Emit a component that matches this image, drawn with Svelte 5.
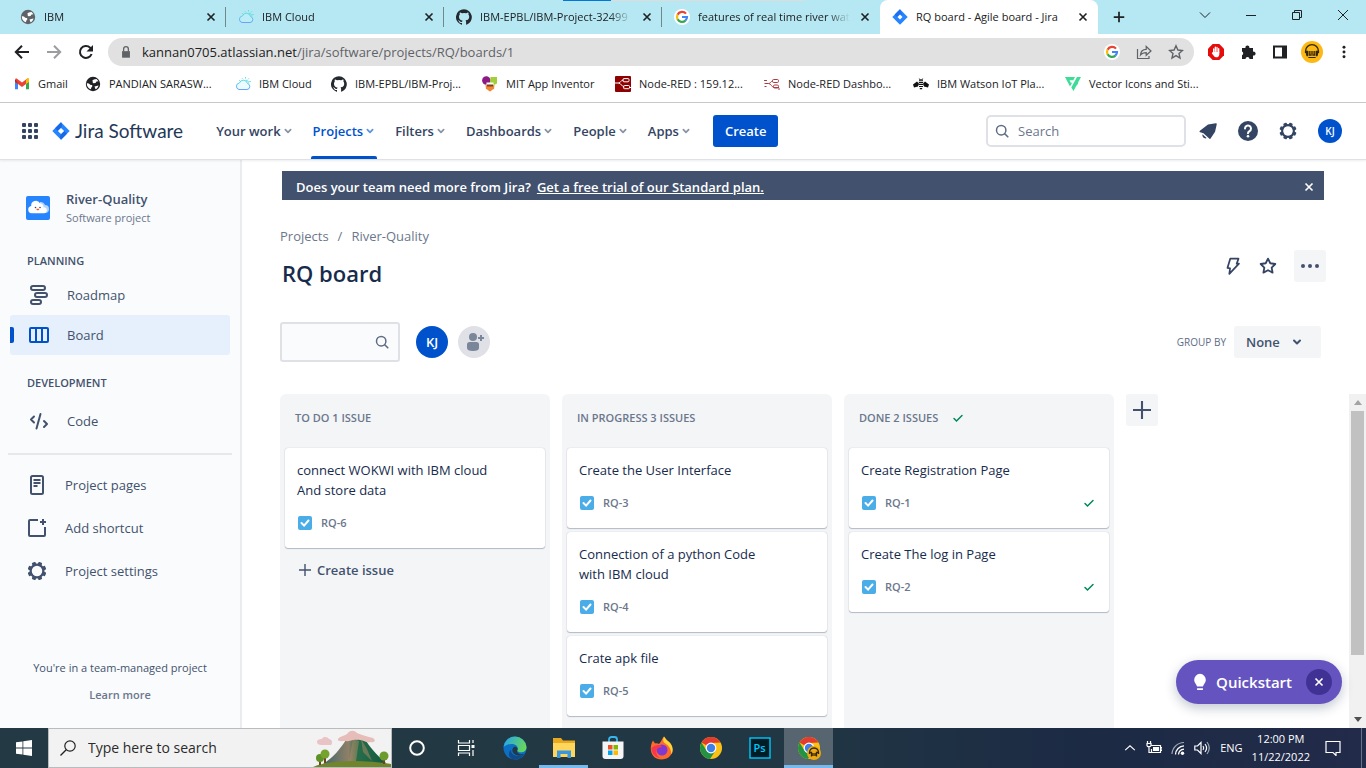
<script>
  const tabs = [
    { icon: 'globe', title: 'IBM' },
    { icon: 'cloud', title: 'IBM Cloud' },
    { icon: 'github', title: 'IBM-EPBL/IBM-Project-32499' },
    { icon: 'google', title: 'features of real time river wat' },
    { icon: 'jira', title: 'RQ board - Agile board - Jira', active: true }
  ];
  const bookmarks = [
    ['gmail', 'Gmail'],
    ['globeDark', 'PANDIAN SARASW...'],
    ['cloud', 'IBM Cloud'],
    ['github', 'IBM-EPBL/IBM-Proj...'],
    ['mit', 'MIT App Inventor'],
    ['nodered', 'Node-RED : 159.12...'],
    ['noderedDash', 'Node-RED Dashbo...'],
    ['bee', 'IBM Watson IoT Pla...'],
    ['vector', 'Vector Icons and Sti...']
  ];
  const nav = ['Your work', 'Projects', 'Filters', 'Dashboards', 'People', 'Apps'];
  const columns = [
    {
      title: 'TO DO 1 ISSUE',
      create: true,
      cards: [{ text: 'connect WOKWI with IBM cloud And store data', id: 'RQ-6' }]
    },
    {
      title: 'IN PROGRESS 3 ISSUES',
      cards: [
        { text: 'Create the User Interface', id: 'RQ-3' },
        { text: 'Connection of a python Code with IBM cloud', id: 'RQ-4' },
        { text: 'Crate apk file', id: 'RQ-5' }
      ]
    },
    {
      title: 'DONE 2 ISSUES',
      done: true,
      cards: [
        { text: 'Create Registration Page', id: 'RQ-1' },
        { text: 'Create The log in Page', id: 'RQ-2' }
      ]
    }
  ];
  const apps = [
    ['cortana', 'Cortana'],
    ['taskview', 'Task view'],
    ['edge', 'Edge'],
    ['folder', 'File Explorer'],
    ['store', 'Store'],
    ['firefox', 'Firefox'],
    ['chrome', 'Chrome'],
    ['ps', 'Photoshop'],
    ['chromeUser', 'Chrome profile']
  ];
</script>

{#snippet chromeArt()}
  <circle cx="12" cy="12" r="11" fill="#fbc116" />
  <path d="M12 12 2.500 6.500A11 11 0 0 1 21.500 6.500L12 7Z" fill="#e33b2e" />
  <path d="M2.500 6.500A11 11 0 0 0 11 23L16.500 14.500 12 17 7.500 14.500Z" fill="#229342" />
  <circle cx="12" cy="12" r="5.400" fill="#fff" />
  <circle cx="12" cy="12" r="4.200" fill="#3f7fe8" />
{/snippet}

{#snippet icon(name, size = 16)}
  <svg width={size} height={size} viewBox={['edge', 'folder', 'store', 'firefox', 'chrome', 'ps', 'chromeUser', 'cortana', 'taskview', 'gear', 'help', 'notify', 'roadmap', 'board', 'code', 'pages', 'shortcut', 'bolt', 'starBig', 'more', 'addPerson', 'bulb', 'cloudFace', 'grid', 'jiraBig', 'profile', 'abp'].includes(name) ? '0 0 24 24' : '0 0 16 16'} fill="none" aria-hidden="true">
    {#if name === 'globe' || name === 'globeDark'}
      <circle cx="8" cy="8" r="7.200" fill={name === 'globe' ? '#5f6368' : '#202124'} />
      <path d="M1.800 7.200c2 0 2.900.5 3.200 1.500l1.800.4c.9.600.7 1.500 0 2-.7.500-.7 1.200-.8 2.200C3.300 12.600 1.600 10 1.800 7.200ZM8.700 3.400l2.800-.4 2 2.300-2 .3-1 1.500-2 .2c-.9-.3-1-.9-.5-1.500l-.7-.6c-.100-.9.700-1 1.400-1.800ZM9.500 10.500l4-1.100c-.4 1.900-1.400 3-3 3.800Z" fill="#fff" />
    {:else if name === 'cloud'}
      <path d="M4 13.500h8a3 3 0 0 0 .6-5.900A4.300 4.300 0 0 0 4.400 7 3.300 3.300 0 0 0 4 13.500Z" stroke="url(#ibm)" stroke-width="1" fill="#c9f3ff" fill-opacity=".35" />
      <path d="M10.500 4.300a3 3 0 0 1 3.300 3.300M10.500 1v1.500M14 2.300l-1 1.100M15.800 5.500h-1.500M7 2.300l.9 1M4.200 4.300l1 .6" stroke="#61dfe0" stroke-width="1" />
      <defs><linearGradient id="ibm" x1="0" y1="4" x2="0" y2="14" gradientUnits="userSpaceOnUse"><stop stop-color="#5fe0dc" /><stop offset="1" stop-color="#67a0ff" /></linearGradient></defs>
    {:else if name === 'github'}
      <path d="M8 .2a8 8 0 0 0-2.500 15.600c.4.100.5-.2.500-.4v-1.500c-2.200.5-2.700-1-2.700-1-.4-.9-.9-1.200-.9-1.200-.7-.5.100-.5.100-.5.800.100 1.200.8 1.200.8.700 1.300 1.900.9 2.400.7.100-.5.300-.9.500-1.100-1.800-.2-3.600-.9-3.600-4 0-.9.300-1.600.8-2.100-.100-.2-.4-1 .100-2.100 0 0 .7-.2 2.200.8a7.500 7.500 0 0 1 4 0c1.500-1 2.200-.8 2.200-.8.4 1.100.2 1.900.100 2.100.5.600.8 1.300.8 2.100 0 3.100-1.900 3.700-3.700 3.900.3.300.6.800.6 1.500v2.300c0 .2.100.5.500.4A8 8 0 0 0 8 .2Z" fill="#24292f" />
    {:else if name === 'google'}
      <circle cx="8" cy="8" r="8" fill="#fff" />
      <path d="M12 4.600A5 5 0 0 0 3.600 5.700" stroke="#ea4335" stroke-width="2.200" />
      <path d="M3.600 5.600a5 5 0 0 0 0 4.800" stroke="#fbbc05" stroke-width="2.200" />
      <path d="M3.600 10.300a5 5 0 0 0 7.800 1.300" stroke="#34a853" stroke-width="2.200" />
      <path d="M11.300 11.700A5 5 0 0 0 13 8H8" stroke="#4285f4" stroke-width="2.200" />
    {:else if name === 'jira'}
      <path d="M8 .3 15.700 8 8 15.700.3 8Z" fill="#2684ff" />
      <path d="M8 .3 10.300 5.800 8 5.500 5 8 2.700 5.600Z" fill="#1d6ff2" />
      <path d="M8 5.500 10.500 8 8 10.500 5.500 8Z" fill="#fff" />
    {:else if name === 'jiraBig'}
      <path d="M12 2.500 21.500 12 12 21.500 2.500 12Z" fill="#2684ff" />
      <path d="M12 2.500c1.600 2 1.400 4.200 0 6L8.600 12 5.500 9ZM12 21.500c-1.600-2-1.400-4.200 0-6L15.400 12l3.100 3Z" fill="#1868e5" />
      <path d="M12 8.600 15.400 12 12 15.400 8.600 12Z" fill="#fff" />
    {:else if name === 'gmail'}
      <path d="M1 3.500v9.700h3V7Z" fill="#4285f4" />
      <path d="M15 3.500v9.700h-3V7Z" fill="#34a853" />
      <path d="M1 3.200 4 4.200V8L1 5.800Z" fill="#c5221f" />
      <path d="m12 4.200 3-1v2.600L12 8Z" fill="#fbbc04" />
      <path d="m1.300 2.600 1.400-.2L8 6.500l5.300-4.100 1.400.2L12 8 8 11 4 8Z" fill="#ea4335" />
      <path d="M12 4v4l3-2.200V3.300c0-.9-1-1.400-1.800-.9Z" fill="#fbbc04" />
    {:else if name === 'mit'}
      <circle cx="4.300" cy="4.500" r="4.200" fill="#8b1a85" />
      <path d="M8.500 1h6.500v6.500l-4 2-3-3Z" fill="#a2cf39" />
      <path d="M3.500 9.300c3-1.800 6-1.800 9 0L12 13c-2 .6-2.500 2-4 2.500C6.500 15 6 13.500 4 13Z" fill="#ef8535" />
      <path d="M4.500 6.500h7v2.700h-7Z" fill="#fff" /><path d="M5 8.500h6v2H5Z" fill="#7d431c" />
    {:else if name === 'nodered'}
      <rect width="16" height="16" rx="1" fill="#8f0000" />
      <path d="M0 7h3.500C6 7 5.500 4 8.500 4M3.500 7C6 7 7 11 9.500 11M14 11.500h2" stroke="#fff" stroke-width="1" />
      <rect x="8" y="2.600" width="6" height="3.200" rx="1" stroke="#fff" /><rect x="8.500" y="9.500" width="6" height="3.200" rx="1" stroke="#fff" />
    {:else if name === 'noderedDash'}
      <path d="M.5 7.500h4C7 7.500 6.500 5 9 5M0 4.500h3M.5 10.500h2M4.500 7.500C7 7.500 8 11.500 10 11.500h5M15 12v2" stroke="#aa3f42" />
      <rect x="8.500" y="3.500" width="6" height="3" rx="1.200" stroke="#aa3f42" /><rect x="9.500" y="9" width="5" height="3" rx="1.200" stroke="#aa3f42" />
    {:else if name === 'bee'}
      <path d="M0 8.500 4 5.500l2 2.200-1 2.800-4 1ZM16 8.500 12 5.500l-2 2.200 1 2.800 4 1Z" fill="#111" />
      <path d="M6 4.200h4M5.800 6.300h4.400M5.800 8.400h4.400M6 10.500h4M6.800 12.600h2.400" stroke="#111" stroke-width="1.200" />
      <path d="m6.300 2.500 1 1.300M9.700 2.500l-1 1.300" stroke="#111" stroke-width=".8" />
    {:else if name === 'vector'}
      <path d="M0 1h10L8.300 4.200H4.500l1.300 2.500h1.300L5 10.500ZM12 1h4L8.500 15 6.300 11.500Z" fill="#3ddc97" />
      <path d="m9.600 7 3.800-.2-1.400 2.500H8.500Z" fill="#3ddc97" />
    {:else if name === 'x'}
      <path d="m4 4 8 8M12 4l-8 8" stroke="currentColor" stroke-width="1.900" />
    {:else if name === 'plusTab'}
      <path d="M8 2v12M2 8h12" stroke="currentColor" stroke-width="2" />
    {:else if name === 'plus'}
      <path d="M8 2v12M2 8h12" stroke="currentColor" stroke-width="1.400" />
    {:else if name === 'winDown'}
      <path d="m3 5.500 5 5 5-5" stroke="currentColor" />
    {:else if name === 'winMin'}
      <path d="M3 8.500h10" stroke="currentColor" />
    {:else if name === 'winRestore'}
      <path d="M3.500 5.500h7v7h-7ZM5.500 5.500v-2h7v7h-2" stroke="currentColor" />
    {:else if name === 'winClose'}
      <path d="m3 3 10 10M13 3 3 13" stroke="currentColor" />
    {:else if name === 'back'}
      <path d="M15 8H2M8 1.800 1.800 8 8 14.200" stroke="currentColor" stroke-width="2" />
    {:else if name === 'forward'}
      <path d="M1 8h13M8 1.800 14.200 8 8 14.200" stroke="currentColor" stroke-width="2" />
    {:else if name === 'reload'}
      <path d="M13.600 10A6 6 0 1 1 12.200 3.700L14 5.500" stroke="currentColor" stroke-width="2" /><path d="M15 1v6.500H8.500Z" fill="currentColor" />
    {:else if name === 'lock'}
      <path d="M3.500 7h9v7.500h-9Z" fill="#5f6368" /><path d="M5.300 7V4.500a2.700 2.700 0 0 1 5.400 0V7" stroke="#5f6368" stroke-width="1.500" />
    {:else if name === 'share'}
      <path d="M1.500 5v9.500h11.500V12M4.500 11c.3-4 2.500-5.700 5.700-5.700V2.500L15 7l-4.800 4.300V8.600C7.500 8.600 5.800 9.200 4.500 11Z" stroke="#5f6368" stroke-width="1.200" />
    {:else if name === 'star'}
      <path d="m8 1.800 1.900 4.200 4.500.5-3.400 3 1 4.500-4-2.400L4 14l1-4.500-3.400-3L6.100 6Z" stroke="#5f6368" stroke-width="1.400" />
    {:else if name === 'abp'}
      <path d="M7 0h10l7 7v10l-7 7H7l-7-7V7Z" fill="#e60c0c" />
      <path d="M8.500 13V7.500M11 11V4.800M13.500 11V5.200M16 12.500V7" stroke="#fff" stroke-width="2" stroke-linecap="round" /><path d="M8 11.500h9V15c0 3.500-2 5-4.500 5S9 18.500 5.500 13.500Z" fill="#fff" />
    {:else if name === 'puzzle'}
      <path d="M2 4h3.500a2 2 0 1 1 3.800 0H13v3.700a2 2 0 1 1 0 3.800V15H9.500a2 2 0 0 0-4 0H2v-3.800a2 2 0 0 0 0-3.700Z" fill="#202124" />
    {:else if name === 'panel'}
      <path d="M2 2.500h12v11H2Z" stroke="#202124" stroke-width="2" /><path d="M10 2h4v12h-4Z" fill="#202124" />
    {:else if name === 'profile'}
      <circle cx="12" cy="12" r="12" fill="#fdb913" />
      <path d="M5 13V11a7 7 0 0 1 14 0v2" stroke="#332508" stroke-width="1.500" /><path d="M4.500 10.500h3.300v6H6ZM19.500 10.500h-3.300v6H18Z" fill="#332508" />
      <path d="M9 11v4.500h2V11M13 11v4.500h2V11M8 18h8" stroke="#332508" stroke-width="1.300" />
    {:else if name === 'dots'}
      <circle cx="8" cy="2.500" r="1.700" fill="#202124" /><circle cx="8" cy="8" r="1.700" fill="#202124" /><circle cx="8" cy="13.500" r="1.700" fill="#202124" />
    {:else if name === 'grid'}
      {#each [4, 10, 16] as x}{#each [4, 10, 16] as y}<rect {x} {y} width="4" height="4" rx="1" fill="#344563" />{/each}{/each}
    {:else if name === 'chev'}
      <path d="m5 6.500 3 3 3-3" stroke="currentColor" stroke-width="2" stroke-linecap="round" stroke-linejoin="round" />
    {:else if name === 'search'}
      <circle cx="7.200" cy="7.200" r="4.700" stroke="#5e6c84" stroke-width="1.500" /><path d="m10.700 10.700 3.100 3.100" stroke="#5e6c84" stroke-width="1.600" stroke-linecap="round" />
    {:else if name === 'notify'}
      <path d="M20.500 3.500 12 5 3.500 11.500c-1 .9-1 1.500 0 1.800l3.500 1.200 6 5.500c1 .9 1.500.9 2.200-.3l4.500-7L21.500 5c.100-1-.2-1.600-1-1.500Z" fill="#344563" />
      <path d="m6 15.500 4.500 4.200c-2 1.300-5.300-1.200-4.500-4.200Z" fill="#344563" />
    {:else if name === 'help'}
      <circle cx="12" cy="12" r="10" fill="#344563" />
      <path d="M9 9.500a3 3 0 1 1 4.500 2.600c-1 .6-1.500 1-1.500 2.200" stroke="#fff" stroke-width="2" stroke-linecap="round" /><circle cx="12" cy="17.300" r="1.300" fill="#fff" />
    {:else if name === 'gear'}
      <circle cx="12" cy="12" r="6.400" stroke="currentColor" stroke-width="2.300" />
      {#each [22.5, 67.5, 112.5, 157.5, 202.5, 247.5, 292.5, 337.5] as a}<rect x="10" y="2.700" width="4" height="3.800" rx="1" fill="currentColor" transform="rotate({a} 12 12)" />{/each}
    {:else if name === 'cloudFace'}
      <rect width="24" height="24" rx="2" fill="#2684ff" />
      <path d="M14 6a5 5 0 0 1 5 3 4 4 0 0 1 0 8h-5Z" fill="#b3d4ff" />
      <path d="M5.500 17.300a3.700 3.700 0 0 1-.3-7.300A4.700 4.700 0 0 1 14 7.200a4 4 0 0 1 3.500 4 3 3 0 0 1 .5 6.100Z" fill="#fff" />
      <circle cx="9.500" cy="11.500" r=".8" fill="#344563" /><circle cx="14" cy="11.500" r=".8" fill="#344563" /><path d="M10.400 12.700h2.800c0 2-2.800 2-2.800 0Z" fill="#ff5630" />
    {:else if name === 'roadmap'}
      <g stroke="currentColor" stroke-width="2"><rect x="4" y="3" width="14" height="4" rx="2" /><rect x="8" y="10" width="12" height="4" rx="2" /><rect x="4" y="17" width="10" height="4" rx="2" /></g>
    {:else if name === 'board'}
      <path d="M4 5h16a1 1 0 0 1 1 1v12a1 1 0 0 1-1 1H4a1 1 0 0 1-1-1V6a1 1 0 0 1 1-1ZM9 5v14M15 5v14" stroke="currentColor" stroke-width="2" />
    {:else if name === 'code'}
      <path d="m7 7.500-3 3 3 3M17 12l3 3-3 3M13.500 5l-4 14.500" stroke="currentColor" stroke-width="2" stroke-linecap="round" stroke-linejoin="round" />
    {:else if name === 'pages'}
      <rect x="6" y="3" width="12" height="18" rx="1.500" stroke="currentColor" stroke-width="2" /><path d="M8.500 7h7M8.500 10h7M8.500 13h4" stroke="currentColor" stroke-width="1.800" />
    {:else if name === 'shortcut'}
      <path d="M13 4H5a1 1 0 0 0-1 1v14a1 1 0 0 0 1 1h14a1 1 0 0 0 1-1v-8M18 3v6M15 6h6" stroke="currentColor" stroke-width="2" />
    {:else if name === 'bolt'}
      <path d="M9 4h9l-2 5.500h2.500L8 20.500l.8-6L6 14Z" stroke="currentColor" stroke-width="1.900" stroke-linejoin="round" />
    {:else if name === 'starBig'}
      <path d="m12 4 2.500 5 5.500.8-4 3.900 1 5.500-5-2.600-5 2.600 1-5.500-4-3.900 5.500-.8Z" stroke="currentColor" stroke-width="2" stroke-linejoin="round" />
    {:else if name === 'more'}
      <circle cx="5" cy="12" r="2" fill="currentColor" /><circle cx="12" cy="12" r="2" fill="currentColor" /><circle cx="19" cy="12" r="2" fill="currentColor" />
    {:else if name === 'addPerson'}
      <circle cx="11" cy="7" r="4" fill="#7a869a" /><path d="M5 14.500c0-1.500 1-2.500 2.500-2.500h7c1.500 0 2.500 1 2.500 2.500V18c0 2-2 3-6 3s-6-1-6-3Z" fill="#7a869a" /><path d="M19 5v6M16 8h6" stroke="#7a869a" stroke-width="2" />
    {:else if name === 'task'}
      <rect x="1" y="1" width="14" height="14" rx="2" fill="#4bade8" /><path d="m4.500 8 2.600 2.600L11.500 5.500" stroke="#fff" stroke-width="2" stroke-linecap="round" />
    {:else if name === 'check'}
      <path d="m4 8.500 2.500 2.500L12 5.500" stroke="#00875a" stroke-width="1.500" stroke-linecap="round" />
    {:else if name === 'bulb'}
      <path d="M12 2a7.500 7.500 0 0 0-7 7.500c0 3 2.500 4.500 3.500 8h7c1-3.500 3.500-5 3.500-8A7.500 7.500 0 0 0 12 2ZM8.500 19.500h7v2h-7Z" fill="#fff" />
    {:else if name === 'win'}
      <path d="M0 2.300 6.500 1.400v6.200H0ZM7.300 1.300 16 0v7.600H7.300ZM0 8.400h6.500v6.200L0 13.700ZM7.300 8.400H16V16l-8.700-1.300Z" fill="#fff" />
    {:else if name === 'lens'}
      <circle cx="10" cy="6" r="5.200" stroke="#222" stroke-width="1.200" /><path d="M6.200 9.800.5 15.500" stroke="#222" stroke-width="1.300" />
    {:else if name === 'cortana'}
      <circle cx="12" cy="12" r="6.800" stroke="#fff" stroke-width="2" />
    {:else if name === 'taskview'}
      <path d="M4.500 4v3h11V4M4.500 20v-3h11v3M4.500 9.500h11v5h-11ZM19 4v3M19 14v6" stroke="#fff" stroke-width="1.200" /><path d="M17.500 9h3v3h-3Z" fill="#fff" />
    {:else if name === 'edge'}
      <defs><linearGradient id="eg" x1="2" y1="4" x2="22" y2="12" gradientUnits="userSpaceOnUse"><stop stop-color="#2aa9e0" /><stop offset="1" stop-color="#68d55a" /></linearGradient></defs>
      <circle cx="12" cy="12" r="11.500" fill="#0c6fc4" />
      <path d="M.6 11A11.500 11.500 0 0 1 23.500 11c.3 4-4 6-7.500 5-2-.6-2.500-1.500-1.500-3C16 9 8 5 .6 11Z" fill="url(#eg)" />
      <path d="M8 14c0 5 6 7.500 13 4.500A11.500 11.500 0 0 1 12 23.500C6 23.500 4 17 8 14Z" fill="#114a8b" />
      <path d="M11 11c-3 2-2 7 3.500 8.300 3 .6 5.500-.3 8-1.800-1.500 1-7 1.500-8.300-1.500-.4-1.200.8-2 .5-3.200-.3-1.300-2-2.600-3.700-1.800Z" fill="#223844" />
    {:else if name === 'folder'}
      <path d="M1 2h8l2 2.500h12V20H1Z" fill="#e8a820" /><path d="M1 7h22v14H1Z" fill="#ffd65c" /><path d="M5 22v-7.500h14V22h-3.500v-4h-7v4Z" fill="#3a96dd" />
    {:else if name === 'store'}
      <path d="M8 6V3.500C8 2 9 1 10.500 1h3C15 1 16 2 16 3.500V6" stroke="#35b8ee" stroke-width="1.800" />
      <path d="M1.500 5.500h21V20a3 3 0 0 1-3 3h-15a3 3 0 0 1-3-3Z" fill="#f5f5f5" />
      <path d="M7 9h4.500v4.500H7Z" fill="#f25022" /><path d="M12.500 9H17v4.500h-4.500Z" fill="#7fba00" /><path d="M7 14.500h4.500V19H7Z" fill="#00a4ef" /><path d="M12.500 14.500H17V19h-4.500Z" fill="#ffb900" />
    {:else if name === 'firefox'}
      <path d="M14 .5c2 2.500 2.500 3.500 4.500 5 6 5 5.500 17.500-6.500 18C-.5 23.500-1 11 3 4.500L5 7.500c2-.5 3 0 4 .5 2-1.500 2.500-5 5-7.500Z" fill="#ff6a2b" />
      <path d="M14 .5c2 2.500 2.500 3.500 4.500 5 5 4 5 9.500 3 13C21 11 17 8.500 14.500 7c-2-2-1.500-4-.5-6.500Z" fill="#ffd43b" />
      <circle cx="12" cy="14" r="5.500" fill="#8038d0" /><path d="M1.500 12c0 6 4 9.500 9 10-4-2-5-5.500-3.500-9 1-2 3.500-1 5-2.500-3-2.500-7-1.500-10.500 1.500Z" fill="#f8374b" />
    {:else if name === 'chrome'}
      {@render chromeArt()}
    {:else if name === 'chromeUser'}
      {@render chromeArt()}
      <circle cx="17" cy="17" r="7" fill="#eba912" /><path d="M12.500 18v-1.500a4.500 4.500 0 0 1 9 0V18" stroke="#332508" stroke-width="1.300" /><path d="M12.200 16.500h2.300v4M21.800 16.500h-2.300v4M16 17v3M18 17v3" stroke="#332508" stroke-width="1.300" />
    {:else if name === 'ps'}
      <rect x="2" y="2" width="20" height="20" fill="#001d26" stroke="#00c8ff" stroke-width="1.400" />
    {:else if name === 'trayUp'}
      <path d="m2.500 10.500 5.500-5 5.500 5" stroke="#fff" stroke-width="1.300" />
    {:else if name === 'battery'}
      <path d="M5.500 5.500h9v7h-9V9M14.500 7.500H16v3h-1.500M1.500 1v2.500M4.500 1v2.500M1 3.500h4v2c0 1.500-4 1.500-4 0ZM3 7v5.500h2.500" stroke="#fff" stroke-width="1.200" /><path d="M7 7h6v4H7Z" fill="#fff" />
    {:else if name === 'wifi'}
      <path d="M2 14A12 12 0 0 1 14 2.500" stroke="#9eabb7" stroke-width="1.200" /><path d="M5.500 14.500A9 9 0 0 1 14 5.800M8.500 14.500a6 6 0 0 1 5.500-5.400" stroke="#fff" stroke-width="1.300" /><circle cx="12.500" cy="13.300" r="1.700" fill="#fff" />
    {:else if name === 'speaker'}
      <path d="M.8 6h2.700L7 2.500v11L3.500 10H.8ZM9 6c1 1.300 1 2.700 0 4M11 4c2 2.500 2 5.500 0 8" stroke="#fff" stroke-width="1.200" /><path d="M13 2c3 4 3 8 0 12" stroke="#9eabb7" stroke-width="1.200" />
    {:else if name === 'note'}
      <path d="M1 1.500h14v11h-4v3l-3-3H1Z" stroke="#fff" stroke-width="1.200" />
    {/if}
  </svg>
{/snippet}

<div class="screen">
  <div class="tabstrip">
    <span class="peek"></span>
    {#each tabs as tab}
      <div class="tab" class:active={tab.active}>
        {@render icon(tab.icon)}
        <span class="tab-title">{tab.title}</span>
        <button class="bare" aria-label="Close tab">{@render icon('x', 14)}</button>
      </div>
    {/each}
    <button class="bare newtab" aria-label="New tab">{@render icon('plusTab', 14)}</button>
    <div class="window-buttons">
      <button class="bare" aria-label="Search tabs">{@render icon('winDown')}</button>
      <button class="bare" aria-label="Minimize">{@render icon('winMin')}</button>
      <button class="bare" aria-label="Restore">{@render icon('winRestore')}</button>
      <button class="bare" aria-label="Close">{@render icon('winClose')}</button>
    </div>
  </div>

  <div class="toolbar">
    <button class="bare" aria-label="Back">{@render icon('back')}</button>
    <button class="bare faded" aria-label="Forward">{@render icon('forward')}</button>
    <button class="bare" aria-label="Reload">{@render icon('reload')}</button>
    <div class="omnibox">
      {@render icon('lock', 14)}
      <span class="url"><b>kannan0705.atlassian.net</b>/jira/software/projects/RQ/boards/1</span>
      <button class="bare" aria-label="Google">{@render icon('google')}</button>
      <button class="bare" aria-label="Share">{@render icon('share')}</button>
      <button class="bare" aria-label="Bookmark">{@render icon('star')}</button>
    </div>
    <div class="extensions">
      <button class="bare" aria-label="Ad blocker">{@render icon('abp')}</button>
      <button class="bare" aria-label="Extensions">{@render icon('puzzle')}</button>
      <button class="bare" aria-label="Side panel">{@render icon('panel')}</button>
      <button class="bare" aria-label="Profile">{@render icon('profile', 22)}</button>
      <button class="bare" aria-label="Menu">{@render icon('dots', 14)}</button>
    </div>
  </div>

  <div class="bookmarks">
    {#each bookmarks as [glyph, label]}
      <a href="#top">{@render icon(glyph)}{label}</a>
    {/each}
  </div>

  <header class="topnav">
    <button class="bare" aria-label="Switch to">{@render icon('grid', 24)}</button>
    <a class="logo" href="#top">{@render icon('jiraBig', 22)}Jira Software</a>
    <nav>
      {#each nav as label}
        <button class="bare item" class:current={label === 'Projects'}>{label}<span>{@render icon('chev', 14)}</span></button>
      {/each}
    </nav>
    <button class="create">Create</button>
    <label class="search">{@render icon('search')}<input type="text" placeholder="Search" aria-label="Search" /></label>
    <div class="nav-icons">
      <button class="bare" aria-label="Notifications">{@render icon('notify', 22)}</button>
      <button class="bare" aria-label="Help">{@render icon('help', 24)}</button>
      <button class="bare" aria-label="Settings">{@render icon('gear', 22)}</button>
      <button class="bare avatar small" aria-label="Account">KJ</button>
    </div>
  </header>

  <div class="body">
    <aside>
      <div class="project">
        {@render icon('cloudFace', 24)}
        <div><strong>River-Quality</strong><span>Software project</span></div>
      </div>
      <h2>PLANNING</h2>
      <a class="row" href="#roadmap">{@render icon('roadmap', 24)}Roadmap</a>
      <a class="row selected" href="#board">{@render icon('board', 24)}Board</a>
      <h2 class="second">DEVELOPMENT</h2>
      <a class="row" href="#code">{@render icon('code', 24)}Code</a>
      <hr />
      <div class="extras">
        <a class="row" href="#pages">{@render icon('pages', 24)}Project pages</a>
        <a class="row" href="#shortcut">{@render icon('shortcut', 24)}Add shortcut</a>
        <a class="row" href="#settings">{@render icon('gear', 24)}Project settings</a>
      </div>
      <footer><p>You're in a team-managed project</p><a href="#learn">Learn more</a></footer>
    </aside>

    <main>
      <div class="banner">
        <span>Does your team need more from Jira?</span>
        <a href="#trial">Get a free trial of our Standard plan.</a>
        <button class="bare" aria-label="Dismiss">{@render icon('x', 14)}</button>
      </div>
      <div class="crumbs"><a href="#projects">Projects</a><span>/</span><a href="#rq">River-Quality</a></div>
      <div class="heading">
        <h1>RQ board</h1>
        <button class="bare" aria-label="Automation">{@render icon('bolt', 22)}</button>
        <button class="bare" aria-label="Star board">{@render icon('starBig', 22)}</button>
        <button class="bare square" aria-label="More">{@render icon('more', 24)}</button>
      </div>
      <div class="controls">
        <label class="filter"><input type="text" aria-label="Search board" />{@render icon('search')}</label>
        <button class="bare avatar" aria-label="Filter by KJ">KJ</button>
        <button class="bare avatar add" aria-label="Add people">{@render icon('addPerson', 24)}</button>
        <label class="group" for="group">GROUP BY</label>
        <div class="select"><select id="group"><option>None</option></select>{@render icon('chev')}</div>
      </div>
      <div class="board">
        {#each columns as col}
          <section>
            <h3>{col.title}{#if col.done}{@render icon('check')}{/if}</h3>
            {#each col.cards as card}
              <article>
                <p>{card.text}</p>
                <div class="meta">{@render icon('task')}<span>{card.id}</span>{#if col.done}{@render icon('check')}{/if}</div>
              </article>
            {/each}
            {#if col.create}<button class="bare add-issue">{@render icon('plus')}Create issue</button>{/if}
          </section>
        {/each}
        <button class="bare square" aria-label="Add column">{@render icon('plus', 24)}</button>
        <div class="scrollbar"><i></i><b></b><i class="down"></i></div>
      </div>
      <div class="quick">
        {@render icon('bulb', 20)}<span>Quickstart</span>
        <button class="bare" aria-label="Close quickstart">{@render icon('x', 14)}</button>
      </div>
    </main>
  </div>

  <div class="taskbar">
    <button class="bare start" aria-label="Start">{@render icon('win')}</button>
    <label class="type">
      {@render icon('lens')}
      <input type="text" placeholder="Type here to search" aria-label="Type here to search" />
      <svg width="78" height="38" viewBox="0 0 78 38" aria-hidden="true">
        <defs><linearGradient id="mt" x1="14" x2="68" y1="0" y2="0" gradientUnits="userSpaceOnUse"><stop stop-color="#4d6a68" /><stop offset=".4" stop-color="#8f8068" /><stop offset=".55" stop-color="#286e4c" /><stop offset="1" stop-color="#155d41" /></linearGradient></defs>
        <path d="M4 13c0-3 4-3 5-3 1-3 6-2 7 0 3 0 4 4 2 6H8c-2 0-4-1-4-3Z" fill="#e9c3c5" />
        <path d="M35 8h16c5 10 13 18 22 26L10 35c10-6 18-16 25-27Z" fill="url(#mt)" />
        <path d="m40 10-4 22h7l3-20ZM48 10l6 10 5 12-9-9Z" fill="#b28b66" opacity=".5" />
        <path d="M25 10c2-3 6-3 9-5 3-4 7-4 10-1 4 2 9 3 16 5 3 2 2 5-2 4-5 2-8-3-14-2-4-1-8 2-11 1-4 0-9 1-8-2Z" fill="#e6bdb8" />
        <path d="M0 38c16-7 49-8 78-3v3Z" fill="#71852c" />
        <path d="M7 36V29M12 34V25M71 35V27" stroke="#704321" stroke-width="2" />
        <circle cx="7" cy="29" r="4" fill="#5f9226" /><circle cx="12" cy="25" r="4.500" fill="#76a32d" /><circle cx="71" cy="27" r="4.500" fill="#6b9b2c" />
      </svg>
    </label>
    {#each apps as [glyph, label]}
      <button class="bare app" class:open={glyph === 'folder'} class:front={glyph === 'chromeUser'} aria-label={label}>
        {@render icon(glyph, 24)}{#if glyph === 'ps'}<em>Ps</em>{/if}
      </button>
    {/each}
    <div class="tray">
      <button class="bare" aria-label="Hidden icons">{@render icon('trayUp', 14)}</button>
      <button class="bare" aria-label="Battery">{@render icon('battery')}</button>
      <button class="bare" aria-label="Network">{@render icon('wifi')}</button>
      <button class="bare" aria-label="Volume">{@render icon('speaker')}</button>
    </div>
    <span class="lang">ENG</span>
    <div class="clock"><span>12:00 PM</span><span>11/22/2022</span></div>
    <button class="bare action" aria-label="Action center">{@render icon('note')}</button>
  </div>
</div>

<style>
  :global(body) { background: #fff; }
  .screen {
    display: flex; flex-direction: column; height: 100vh; overflow: hidden;
    font-family: "Open Sans", "Noto Sans", sans-serif; font-size: 13px; line-height: 20px; color: #172b4d;
  }
  .screen :global(*) { box-sizing: border-box; }
  svg { display: block; flex: none; }
  a { color: inherit; text-decoration: none; }
  h1, h2, h3, p { margin: 0; }
  input, select { font: inherit; color: inherit; border: 0; background: none; outline: 0; padding: 0; min-width: 0; }
  .bare {
    display: flex; align-items: center; justify-content: center; flex: none;
    border: 0; padding: 0; background: none; font: inherit; color: inherit;
  }

  .tabstrip { position: relative; display: flex; align-items: stretch; flex: none; height: 34px; padding-left: 8px; background: #b5e8f2; color: #202124; font-size: 11px; }
  .peek { position: absolute; top: 0; left: 563px; width: 241px; height: 1px; background: linear-gradient(90deg, #0078d7 48px, #dcdcdc 48px); }
  .tab { position: relative; display: flex; align-items: center; gap: 8px; flex: 0 1 218px; min-width: 0; padding: 0 8px 0 12px; }
  .tab:not(.active)::after { content: ""; position: absolute; right: 0; top: 7px; height: 20px; width: 1px; background: #71878c; }
  .tab:has(+ .active)::after { display: none; }
  .tab-title { flex: 1; min-width: 0; white-space: nowrap; mask-image: linear-gradient(90deg, #000 85%, transparent); }
  .tab.active { background: #fff; border-radius: 8px 8px 0 0; }
  .tab.active .tab-title { mask-image: none; }
  .newtab { width: 42px; }
  .window-buttons { display: flex; margin-left: auto; padding-bottom: 5px; }
  .window-buttons button { width: 46px; }

  .toolbar { display: flex; align-items: center; flex: none; height: 36px; padding: 0 6px; color: #202124; }
  .toolbar > button { width: 32px; }
  .faded { color: #9b9da0; }
  .omnibox { display: flex; align-items: center; flex: 1; height: 28px; margin-left: 6px; padding: 0 2px 0 11px; border-radius: 14px; background: #e1e1e1; color: #5f6368; }
  .omnibox button { width: 32px; }
  .url { flex: 1; margin-left: 9px; font-size: 13px; }
  .url b { font-weight: 400; color: #202124; }
  .extensions { display: flex; margin-left: 6px; }
  .extensions button { width: 32px; }

  .bookmarks { display: grid; grid-template-columns: 71px 150px 96px 151px 133px 149px 149px 152px auto; align-items: center; flex: none; height: 33px; padding: 0 14px 4px; border-bottom: 1px solid #c9c9c9; color: #202124; font-size: 11px; }
  .bookmarks a { display: flex; align-items: center; gap: 8px; white-space: nowrap; }

  .topnav { position: relative; z-index: 1; display: flex; align-items: center; flex: none; height: 57px; padding: 0 24px 0 18px; background: #fff; border-bottom: 1px solid #dfe1e6; box-shadow: 0 1px 2px #091e4214; color: #344563; font-weight: 600; }
  .logo { display: flex; align-items: center; gap: 3px; margin: 0 25px 0 8px; font-family: Lato, sans-serif; font-size: 19px; font-weight: 400; color: #253858; }
  nav { display: flex; align-self: stretch; gap: 10px; }
  .item { position: relative; padding-left: 8px; }
  .item span { color: #8993a4; }
  .current { color: #0052cc; }
  .current span { color: #5e93e0; }
  .current::after { content: ""; position: absolute; left: 6px; right: 0; bottom: 0; height: 3px; border-radius: 2px 2px 0 0; background: #0052cc; }
  .create { height: 32px; margin-left: 20px; padding: 0 12px; border: 0; border-radius: 3px; background: #0052cc; color: #fff; font: inherit; font-weight: 600; }
  .search { display: flex; align-items: center; gap: 8px; width: 200px; height: 32px; margin-left: auto; padding: 0 6px; border: 2px solid #dfe1e6; border-radius: 5px; font-weight: 400; }
  input::placeholder { color: #6b778c; opacity: 1; }
  .nav-icons { display: flex; align-items: center; margin-left: 2px; }
  .nav-icons button:not(.avatar) { width: 40px; }
  .avatar { width: 32px; height: 32px; border-radius: 50%; background: #0052cc; color: #fff; font-weight: 600; }
  .avatar.small { width: 24px; height: 24px; margin-left: 10px; font-size: 10px; }
  .avatar.add { background: #dfe1e6; margin-left: 10px; }

  .body { display: flex; flex: 1; min-height: 0; }
  aside { display: flex; flex-direction: column; flex: 0 0 242px; padding: 29px 0 23px; background: #fafbfc; border-right: 2px solid #ebecf0; color: #42526e; }
  .project { display: flex; align-items: center; gap: 16px; padding-left: 26px; }
  .project strong, .project span { display: block; }
  .project strong { font-weight: 600; }
  .project span { font-size: 11px; line-height: 18px; color: #6b778c; }
  h2 { margin: 26px 0 6px 27px; font-size: 11px; line-height: 16px; font-weight: 600; }
  h2.second { margin: 20px 0 10px 27px; }
  .row { position: relative; display: flex; align-items: center; gap: 16px; flex: none; height: 40px; margin: 0 10px; padding-left: 17px; border-radius: 3px; }
  .selected { background: #e6effc; }
  .selected svg { color: #0052cc; }
  .selected::before { content: ""; position: absolute; left: 0; top: 12px; width: 4px; height: 16px; border-radius: 0 2px 2px 0; background: #0052cc; }
  hr { width: 224px; height: 2px; margin: 12px 8px 10px; border: 0; background: #e6e8eb; flex: none; }
  .extras { display: grid; gap: 3px; }
  .extras .row { padding-left: 15px; }
  footer { margin-top: auto; text-align: center; font-size: 11px; }
  footer p { margin-bottom: 7px; }
  footer a { color: #6b778c; font-weight: 600; }

  main { position: relative; display: flex; flex-direction: column; flex: 1; min-width: 0; padding: 11px 0 0 38px; }
  .banner { display: flex; align-items: center; gap: 6px; flex: none; height: 29px; margin: 0 42px 0 2px; padding: 3px 8px 0 14px; background: #42526e; color: #fff; font-weight: 600; }
  .banner a { text-decoration: underline; }
  .banner button { margin-left: auto; }
  .crumbs { display: flex; gap: 9px; margin-top: 26px; color: #6b778c; }
  .heading { display: flex; align-items: flex-start; margin: 4px 40px 0 2px; color: #344563; }
  h1 { flex: 1; margin-top: 9px; font-size: 22px; line-height: 28px; font-weight: 600; color: #172b4d; }
  .heading button { width: 35px; height: 32px; }
  .square, .heading .square { width: 32px; height: 32px; border-radius: 3px; background: #f4f5f7; color: #42526e; }
  .heading .square { margin-left: 9px; }
  .controls { display: flex; align-items: center; margin: 35px 45px 32px 0; }
  .filter { display: flex; align-items: center; width: 120px; height: 40px; margin-right: 16px; padding: 0 8px; border: 2px solid #dfe1e6; border-radius: 3px; background: #fafbfc; }
  .filter input { flex: 1; width: 0; }
  .group { margin: 0 8px 0 auto; font-size: 10px; color: #5e6c84; }
  .select { position: relative; display: flex; align-items: center; height: 32px; border-radius: 3px; background: #f4f5f7; color: #42526e; }
  .select select { width: 87px; height: 32px; padding-left: 12px; appearance: none; font-weight: 600; }
  .select svg { position: absolute; right: 16px; pointer-events: none; }

  .board { display: flex; gap: 12px; flex: 1; min-height: 0; }
  section { flex: 0 1 270px; padding: 0 5px; border-radius: 6px 6px 0 0; background: #f4f5f7; overflow: hidden; }
  h3 { display: flex; align-items: center; gap: 12px; height: 54px; padding: 0 10px 6px; font-size: 11px; line-height: 16px; font-weight: 600; color: #6b778c; }
  article { margin-bottom: 4px; padding: 12px 12px 14px; border-radius: 3px; background: #fff; box-shadow: 0 1px 1px #091e4240, 0 0 1px #091e424f; }
  article p { max-width: 200px; }
  .meta { display: flex; align-items: center; gap: 8px; height: 22px; margin-top: 12px; font-size: 11px; font-weight: 600; color: #6b778c; }
  .meta span { flex: 1; }
  .add-issue { gap: 4px; height: 36px; padding-left: 12px; font-weight: 600; color: #42526e; }
  .scrollbar { display: flex; flex-direction: column; align-items: center; width: 17px; margin-left: auto; background: #f1f1f1; }
  .scrollbar b { width: 13px; flex: 0 0 73%; background: #c1c1c1; }
  .scrollbar i { margin: 6px 0; border: 4px solid transparent; border-top-width: 0; border-bottom: 5px solid #a3a3a3; }
  .scrollbar .down { margin-top: auto; border-bottom-width: 0; border-top: 5px solid #505050; }
  .quick { position: absolute; right: 24px; bottom: 24px; display: flex; align-items: center; height: 44px; padding: 0 10px 0 14px; border-radius: 22px; background: #6554c0; color: #fff; font-size: 15px; font-weight: 600; box-shadow: 0 4px 12px #091e4240; }
  .quick span { margin: 0 14px 0 6px; }
  .quick button { width: 26px; height: 26px; border-radius: 50%; background: #403294; }

  .taskbar { display: flex; align-items: stretch; flex: none; height: 40px; background: linear-gradient(90deg, #233943, #213844 55%, #1c2a44 80%, #222b4a); color: #fff; font-size: 11px; }
  .start { width: 48px; }
  .type { display: flex; align-items: center; gap: 12px; width: 344px; padding-left: 11px; border: 1px solid #b9bcbe; background: #f2f2f2; font-size: 14px; }
  .type input { flex: 1; }
  .type input::placeholder { color: #2b2b2b; }
  .app { position: relative; width: 49px; }
  .app em { position: absolute; font-size: 11px; font-style: normal; font-weight: 600; color: #00c8ff; }
  .open { box-shadow: inset 0 -3px #76b9ed; }
  .front { background: #56656f; box-shadow: inset 0 -3px #76b9ed; }
  .tray { display: flex; margin-left: auto; }
  .tray button { width: 24px; }
  .lang { align-self: center; margin-left: 6px; }
  .clock { display: flex; flex-direction: column; justify-content: center; margin-left: 9px; line-height: 18px; text-align: center; }
  .action { width: 52px; padding-right: 6px; border-right: 1px solid #66718a; margin-right: 4px; }
</style>
